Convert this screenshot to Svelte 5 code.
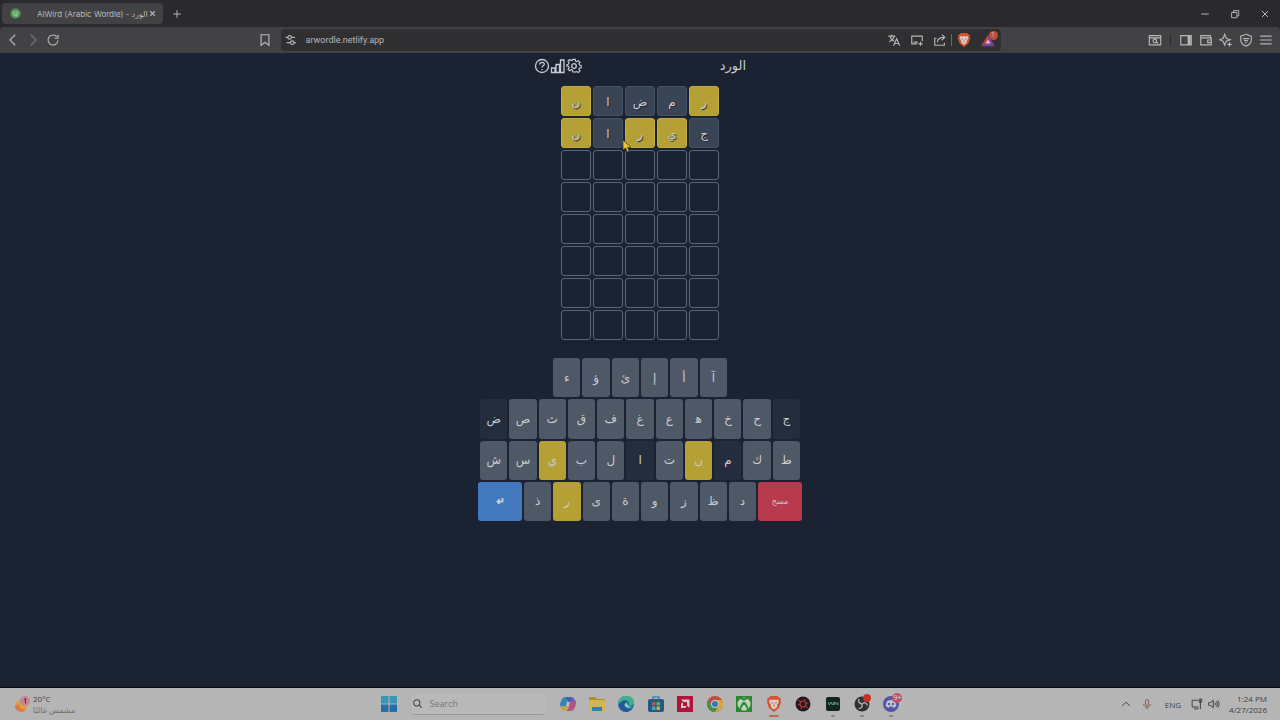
<script>
  const letters = [
    ["ر", "م", "ض", "ا", "ن"],
    ["ج", "ي", "ر", "ا", "ن"],
  ];
  const states = [
    ["present", "absent", "absent", "absent", "present"],
    ["absent", "present", "present", "absent", "present"],
  ];
  const empty_rows = [1, 2, 3, 4, 5, 6];

  const keyboard = [
    ["آ", "أ", "إ", "ئ", "ؤ", "ء"],
    ["ج", "ح", "خ", "ه\u200d", "ع", "غ", "ف", "ق", "ث", "ص", "ض"],
    ["ط", "ك", "م", "ن", "ت", "ا", "ل", "ب", "ي", "س", "ش"],
    ["delete", "د", "ظ", "ز", "و", "ة", "ى", "ر", "ذ", "enter"],
  ];

  // stroke paths on a 16x16 grid
  const icons = {
    back: "M10.5 2L4.500 8l6 6",
    forward: "M5.5 2l6 6-6 6",
    reload: "M12.500 4.500A5.700 5.700 0 1 0 13.700 8.500M13.800 2v4H9.800",
    bookmark: "M3.500 2h9v12L8 10.500l-4.500 3.500z",
    site: "M2 5h2M8.5 5h4M3 11h4M11.5 11h2M4.5 5a2 2 0 1 0 4 0a2 2 0 1 0-4 0M7.5 11a2 2 0 1 0 4 0a2 2 0 1 0-4 0",
    translate: "M1.500 3.500h8M5.500 2v1.500M8.500 3.500c-.8 3-3 5-6 6.500M3.500 4c.7 2.500 2 4 4.500 5.500M7.500 14.500l3.500-8 3.500 8M8.800 12h4.500",
    cast: "M8 12.500H2V3.500h12v6M9.5 12.500h5M12 10v4.500M4 10.500h5",
    share: "M4 6H2v8h11v-3M5 10.500c.3-4 3-5.500 8-5.500M10 1.800L13.500 5 10 8.300",
    find: "M1.500 3h13v10.500h-13zM1.500 5.500h13M5.800 9a2 2 0 1 0 4 0a2 2 0 1 0-4 0M9.500 10.300l1.800 1.700",
    sidebar: "M2 3h12v10.500H2zM10.500 3.500v9.500M11.500 3.500v9.500M12.500 3.500v9.500",
    wallet: "M13 5.500V3H2v10.500h12v-8H2M14 8h-4v3h4",
    sparkle: "M6.500 1.500L8.200 6l4.600 1.700-4.600 1.800-1.700 4.500-1.700-4.500L.8 7.700 4.800 6zM12 10.500v5M9.500 13h5",
    shield: "M8 1.500l6 2.200V8c0 3.300-2.200 5.500-6 7-3.800-1.500-6-3.700-6-7V3.700zM4.500 6.500h7M5.800 8.700h4.400M7.200 11h1.600",
    menu: "M1.500 3.500h13M1.500 8h13M1.500 12.500h13",
    close: "M4 4l8 8M12 4l-8 8",
    plus: "M8 3v10M3 8h10",
    minimize: "M3 8h10",
    restore: "M3.500 6h7v7h-7zM6 6V3.500h7v7h-2.500",
    search: "M2.500 7a4.500 4.500 0 1 0 9 0a4.500 4.500 0 1 0-9 0M10.300 10.300L14 14",
    help: "M1.500 8a6.500 6.500 0 1 0 13 0a6.500 6.500 0 1 0-13 0M5.800 6.500c0-3 4.600-2.800 4.500-.2C10.200 7.800 8 7.800 8 9.500M8 11v1",
    stats: "M1.500 10H5v4.500H1.500zM6 6.500h3.500v8H6zM10.500 2H14v12.500h-3.500z",
    up: "M3 10.500l5-5 5 5",
    mic: "M6 4a2 2 0 0 1 4 0v4a2 2 0 0 1-4 0zM3.500 8c0 5.500 9 5.500 9 0M8 12v3",
    network: "M9 3H1.500v9H10M4 14.500h6M12.500 2v13M10.800 1.500h3.500v4h-3.500z",
    volume: "M1 6h2.500L7 3v10L3.500 10H1zM9 6q2 2 0 4M11 4.500q3 3.500 0 7M13 3q4 5 0 10",
    enter: "M12 3v6H4.500M7.500 5.500L4 9l3.500 3.500",
  };

  const nav = ["back", "forward", "reload"];
  const tools = ["sidebar", "wallet", "sparkle", "shield", "menu"];
  const apps = [
    "Copilot",
    "Explorer",
    "Edge",
    "Store",
    "AMD",
    "Chrome",
    "Xbox",
    "Brave",
    "Recorder",
    "Terminal",
    "OBS",
    "Discord",
  ];
  const running = ["Terminal", "OBS", "Discord"];

  let search = $state("");
  let url = $state("arwordle.netlify.app");

  function key_state(key) {
    if (key === "delete" || key === "enter") return key;
    if (["ن", "ي", "ر"].includes(key)) return "present";
    if (["ج", "ض", "م", "ا"].includes(key)) return "used";
    return "";
  }
</script>

{#snippet icon(name)}
  <svg class="icon" viewBox="0 0 16 16" aria-hidden="true"><path d={icons[name]} /></svg>
{/snippet}

{#snippet brave()}
  <svg class="logo" viewBox="0 0 16 16" aria-hidden="true">
    <path d="M4.500 0h7l2 2 1.500.5-.5 2 .5 1.500-2 6L8 16l-5-4-2-6 .5-1.500-.5-2L2.500 2z" fill="#d6532f" />
    <path d="M4 3.500l2.500.5L8 3.500l1.500.5 2.500-.5 1 2.500-2 3 .2 2L8 13.500 4.800 11 5 9 3 6z" fill="#d8d0cc" />
    <path d="M4.500 5.800l2.500 1-.5 1.200zM11.500 5.800l-2.500 1 .5 1.200zM8 7l.6 3L8 11l-.6-1z" fill="#d6532f" />
  </svg>
{/snippet}

<div class="screen">
  <header class="browser">
    <div class="tabs">
      <div class="tab">
        <svg class="favicon" viewBox="0 0 12 12" aria-hidden="true">
          <circle cx="6" cy="6" r="5.500" fill="#579a5c" />
          <path d="M4 4.500h4v3H4zM5 8.500h3" fill="none" stroke="#a9cfa9" />
        </svg>
        <span class="tab-title">AlWird (Arabic Wordle) - الورد</span>
        <button class="small" aria-label="Close tab">{@render icon("close")}</button>
      </div>
      <button class="new-tab" aria-label="New tab">{@render icon("plus")}</button>
      <div class="window-buttons">
        <button aria-label="Minimize">{@render icon("minimize")}</button>
        <button aria-label="Restore">{@render icon("restore")}</button>
        <button aria-label="Close">{@render icon("close")}</button>
      </div>
    </div>
    <div class="toolbar">
      <div class="side">
        {#each nav as name}
          <button class={name} aria-label={name}>{@render icon(name)}</button>
        {/each}
        <button class="bookmark" aria-label="Bookmark">{@render icon("bookmark")}</button>
      </div>
      <div class="address">
        <button aria-label="Site information">{@render icon("site")}</button>
        <input aria-label="Address" bind:value={url} />
        <div class="address-icons">
          <button aria-label="Translate">{@render icon("translate")}</button>
          <button aria-label="Cast">{@render icon("cast")}</button>
          <button aria-label="Share">{@render icon("share")}</button>
        </div>
        <span class="divider"></span>
        <button class="shields" aria-label="Shields">{@render brave()}</button>
        <button class="rewards" aria-label="Rewards">
          <svg class="logo" viewBox="0 0 16 16" aria-hidden="true">
            <path d="M8 2v8L0 15z" fill="#c8472f" />
            <path d="M8 2l8 13-8-5z" fill="#8b3f91" />
            <path d="M8 10l8 5H0z" fill="#6f4a9d" />
            <path d="M8 7.500l3 4.500H5z" fill="#d5bfd0" />
          </svg>
          <span class="count">1</span>
        </button>
      </div>
      <div class="side right">
        <button aria-label="Find">{@render icon("find")}</button>
        <span class="divider dark"></span>
        {#each tools as name}
          <button aria-label={name}>{@render icon(name)}</button>
        {/each}
      </div>
    </div>
  </header>

  <main dir="rtl">
    <div class="title">
      <h1>الورد</h1>
      <div class="actions">
        <button aria-label="Settings">
          <svg class="icon" viewBox="0 0 16 16" aria-hidden="true">
            <path d="M6.700 1h2.600l.4 1.900 1.400.6 1.700-1.100 1.800 1.800-1.100 1.700.6 1.400 1.900.4v2.600l-1.900.4-.6 1.400 1.100 1.700-1.800 1.800-1.700-1.100-1.400.6L9.300 15H6.700l-.4-1.900-1.400-.6-1.700 1.100-1.800-1.800 1.100-1.700-.6-1.400L0 8.300V7l1.900-.9.6-1.400L1.400 3l1.800-1.800 1.700 1.100 1.400-.6z" transform="translate(.8 .5) scale(.9)" />
            <circle cx="8" cy="8" r="2.300" />
          </svg>
        </button>
        <button aria-label="Statistics">{@render icon("stats")}</button>
        <button aria-label="Help">{@render icon("help")}</button>
      </div>
    </div>

    <div class="board">
      {#each letters as row, i}
        {#each row as letter, j}
          <div class="tile {states[i][j]}">{letter}</div>
        {/each}
      {/each}
      {#each empty_rows as row}
        {#each [0, 1, 2, 3, 4] as cell}
          <div class="tile"></div>
        {/each}
      {/each}
      <svg class="cursor" viewBox="0 0 10 14" aria-hidden="true">
        <path d="M1 1v10l2.500-2 1.800 4 1.800-1-1.600-3.500H9z" fill="#f0c52c" stroke="#33301f" stroke-width=".7" />
      </svg>
    </div>

    <div class="keyboard">
      {#each keyboard as row, i}
        <div class="keys row-{i}">
          {#each row as key}
            <button class="key {key_state(key)}" aria-label={key}>
              {#if key === "enter"}
                {@render icon("enter")}
              {:else if key === "delete"}
                مسح
              {:else}
                {key}
              {/if}
            </button>
          {/each}
        </div>
      {/each}
    </div>
  </main>

  <footer class="taskbar">
    <div class="weather">
      <svg viewBox="0 0 18 18" aria-hidden="true">
        <circle cx="8" cy="11" r="6" fill="#dfa13b" />
        <path d="M2 11a6 6 0 0 0 11 3c-5 1-7-1-7-5z" fill="#d47b48" />
        <circle cx="12" cy="6" r="5" fill="#c98597" />
        <path d="M11 4.500l1.500-1v5" stroke="#54303c" fill="none" />
      </svg>
      <div>
        <div>20°C</div>
        <div class="faint" dir="rtl">مشمس غالبًا</div>
      </div>
    </div>

    <div class="center">
      <button class="app" aria-label="Start">
        <svg viewBox="0 0 16 16" aria-hidden="true">
          <path d="M0 0h7.500v7.500H0zM8.500 0H16v7.500H8.500z" fill="#3b93b5" />
          <path d="M0 8.500h7.500V16H0zM8.500 8.500H16V16H8.500z" fill="#236fa8" />
        </svg>
      </button>
      <label class="search">
        {@render icon("search")}
        <input type="text" placeholder="Search" aria-label="Search" bind:value={search} />
      </label>
      <div class="apps">
        {#each apps as app}
          <button class="app" class:running={running.includes(app)} class:active={app === "Brave"} aria-label={app}>
            {#if app === "Brave"}
              {@render brave()}
            {:else}
              <svg viewBox="0 0 16 16" aria-hidden="true">
                {#if app === "Copilot"}
                  <path d="M5 1h5q-2 1-3 5l-1 4q-1 2-3 2-3 0-3-3 0-3 2-6 1-2 3-2z" fill="#3386b5" />
                  <path d="M0 9q1 2 4 1h4l-1 3q-1 2-3 2-2 0-3-3z" fill="#c4a34b" />
                  <path d="M11 15H6q2-1 3-5l1-4q1-2 3-2 3 0 3 3 0 3-2 6-1 2-3 2z" fill="#b65385" />
                  <path d="M16 7q-1-2-4-1H8l1-3q1-2 3-2 2 0 3 3z" fill="#7d5bb5" />
                  <path d="M5 1h5q2 0 2 4-3 0-4 1-1-4-3-5z" fill="#3b62ae" />
                  <path d="M7 6h2.500L8.500 10H6z" fill="#c3b7bf" />
                {:else if app === "Explorer"}
                  <path d="M0 1h6l2 2h8v12H0z" fill="#b48d2b" />
                  <path d="M0 4h16v11H0z" fill="#d1b753" />
                  <path d="M3 15v-4h10v4z" fill="#347ead" />
                {:else if app === "Edge"}
                  <circle cx="8" cy="8" r="8" fill="#1b75a5" />
                  <path d="M0 8C0-3 16-2 16 6q0 4-6 4 3-5-2-5-4 0-8 3z" fill="#45ae91" />
                  <path d="M3 6q4-4 7 0Q6 5 6 9q1 5 8 4-6 6-12 0-3-4 1-7z" fill="#215a99" />
                  <path d="M9 7q-3 0-2 3 2 3 7 1-5 0-5-4z" fill="#b5c5c5" />
                {:else if app === "Store"}
                  <path d="M5 4V1h6v3" fill="none" stroke="#3c8aa8" stroke-width="1.500" />
                  <rect y="3" width="16" height="13" rx="2" fill="#235984" />
                  <path d="M4 6h3.500v3.500H4z" fill="#b25445" />
                  <path d="M8.500 6H12v3.500H8.500z" fill="#6caa55" />
                  <path d="M4 10.500h3.500V14H4z" fill="#48a0bc" />
                  <path d="M8.500 10.500H12V14H8.500z" fill="#c0ad4c" />
                {:else if app === "AMD"}
                  <path d="M0 0h16v16H0z" fill="#ad1438" />
                  <path d="M4 3.500h8.500V12L10 9.500V6H6.500zM4 8l2-2v4h4l-2 2H4z" fill="#d8c6cb" />
                {:else if app === "Chrome"}
                  <circle cx="8" cy="8" r="8" fill="#c64b3d" />
                  <path d="M1.100 4A8 8 0 0 0 8 16l3.500-6H4.500z" fill="#42904e" />
                  <path d="M15 4a8 8 0 0 1-7 12l3.500-6L8 4z" fill="#cfa938" />
                  <circle cx="8" cy="8" r="4" fill="#c8c8c8" />
                  <circle cx="8" cy="8" r="3" fill="#3b78b6" />
                {:else if app === "Xbox"}
                  <path d="M0 0h16v16H0z" fill="#28892f" />
                  <circle cx="8" cy="8" r="6.500" fill="#c2d0c0" />
                  <path d="M3.500 14q0-5 4.500-8.500 4.500 3.500 4.500 8.500-4.500 2-9 0z" fill="#28892f" />
                  <path d="M3 3q2.500-.5 5 2 2.500-2.500 5-2-2.500-2-5-.8Q5.500 1 3 3z" fill="#28892f" />
                  <path d="M5 14q0-3 3-5.500 3 2.500 3 5.500-3 1-6 0z" fill="#c2d0c0" />
                {:else if app === "Recorder"}
                  <circle cx="8" cy="8" r="7.500" fill="#28191d" />
                  <circle cx="8" cy="8" r="3" fill="none" stroke="#bd3543" stroke-width="1.200" />
                  <path d="M3 4l3 2M10 10l3 2M10 3L9 5.500M6 13l1-2.500M2.500 9L5 8.500M11 7.500l2.500-1" stroke="#bd3543" />
                {:else if app === "Terminal"}
                  <rect x="1" y="1" width="14" height="14" rx="2" fill="#132521" />
                  <path d="M3 6l1.500 3L6 6l1.500 3L9 6v3M10 9V6l3 3V6" fill="none" stroke="#66947d" />
                {:else if app === "OBS"}
                  <circle cx="8" cy="8" r="7.500" fill="#303032" />
                  <path d="M8 8Q3.500 7 5 3M8 8q4-3 5.500 1.500M8 8q1 4.500-3.500 4.500" fill="none" stroke="#a7a7a7" stroke-width="1.500" />
                {:else if app === "Discord"}
                  <circle cx="8" cy="8" r="8" fill="#5256a6" />
                  <path d="M4 5q4-2 8 0l1.500 5-3 2-1-1.500h-3l-1 1.500-3-2z" fill="#c0c0d0" />
                  <path d="M5 7h2v2H5zM9 7h2v2H9z" fill="#5256a6" />
                {/if}
              </svg>
            {/if}
            {#if app === "OBS"}<span class="badge"></span>{/if}
            {#if app === "Discord"}<span class="badge pink">9+</span>{/if}
          </button>
        {/each}
      </div>
    </div>

    <div class="tray">
      <button aria-label="Hidden icons">{@render icon("up")}</button>
      <button class="mic" aria-label="Microphone">{@render icon("mic")}</button>
      <span class="lang">ENG</span>
      <div class="system">
        <button aria-label="Network">{@render icon("network")}</button>
        <button aria-label="Volume">{@render icon("volume")}</button>
      </div>
      <div class="clock">
        <div>1:24 PM</div>
        <div>4/27/2026</div>
      </div>
    </div>
  </footer>
</div>

<style>
  :global(body) {
    margin: 0;
    background: #1b2333;
  }

  .screen {
    display: flex;
    flex-direction: column;
    min-height: 100vh;
    font-family: "Open Sans", "DejaVu Sans", sans-serif;
    color: #c9cbd0;
  }

  button {
    display: flex;
    align-items: center;
    justify-content: center;
    flex-shrink: 0;
    padding: 0;
    border: 0;
    background: none;
    color: inherit;
    font: inherit;
    cursor: pointer;
  }

  input {
    min-width: 0;
    padding: 0;
    border: 0;
    outline: 0;
    background: none;
    color: inherit;
    font: inherit;
  }

  .icon {
    width: 16px;
    height: 16px;
    fill: none;
    stroke: currentColor;
    stroke-width: 1.3;
  }

  .logo {
    width: 14px;
    height: 14px;
  }

  .browser {
    background: #2a2a2e;
    color: #b6b6b8;
    font-family: Inter, "DejaVu Sans", sans-serif;
  }

  .tabs {
    display: flex;
    align-items: center;
    height: 27px;
  }

  .tab {
    display: flex;
    align-items: center;
    box-sizing: border-box;
    width: 161px;
    height: 21px;
    margin-left: 2px;
    padding: 0 6px 0 8px;
    border-radius: 4px;
    background: #424245;
    font-size: 8px;
  }

  .favicon {
    width: 11px;
    height: 11px;
    flex-shrink: 0;
  }

  .tab-title {
    flex: 1;
    margin-left: 16px;
    white-space: nowrap;
  }

  .small .icon {
    width: 9px;
    height: 9px;
    stroke-width: 2;
  }

  .new-tab {
    margin-left: 8px;
  }

  .new-tab .icon {
    width: 12px;
    height: 12px;
  }

  .window-buttons {
    display: flex;
    gap: 18px;
    margin-left: auto;
    padding-right: 9px;
  }

  .window-buttons .icon {
    width: 12px;
    height: 12px;
  }

  .toolbar {
    display: flex;
    height: 26px;
    border-radius: 4px 4px 0 0;
    background: #424245;
  }

  .side {
    display: flex;
    flex: 1;
    align-items: center;
    gap: 4px;
    padding: 0 8px 0 5px;
  }

  .side .forward {
    color: #77777a;
  }

  .side .bookmark {
    margin-left: auto;
  }

  .side.right {
    justify-content: flex-end;
    padding: 0 6px;
  }

  .side .icon,
  .address .icon {
    width: 14px;
    height: 14px;
  }

  .side button {
    width: 16px;
  }

  .address {
    display: flex;
    align-items: center;
    align-self: center;
    box-sizing: border-box;
    width: 720px;
    max-width: 60%;
    height: 22px;
    padding: 0 3px;
    border-radius: 4px;
    background: #303033;
    font-family: Roboto, sans-serif;
    font-size: 9px;
  }

  .address input {
    flex: 1;
    margin-left: 8px;
  }

  .address-icons {
    display: flex;
    gap: 9px;
  }

  .divider {
    width: 1px;
    height: 12px;
    margin: 0 5px 0 4px;
    background: #67676a;
  }

  .divider.dark {
    margin: 0 3px;
    background: #2c2c2f;
  }

  .rewards {
    position: relative;
    margin: 0 3px 0 10px;
  }

  .count {
    position: absolute;
    top: -2px;
    right: -3px;
    width: 9px;
    border-radius: 5px;
    background: #bd5037;
    font-size: 7px;
    line-height: 9px;
  }

  main {
    display: flex;
    flex: 1;
    flex-direction: column;
    align-items: center;
    background: #1b2333;
    font-family: "DejaVu Sans", sans-serif;
  }

  .title {
    display: flex;
    align-items: center;
    justify-content: space-between;
    width: 212px;
    height: 26px;
    margin-bottom: 7px;
  }

  h1 {
    margin: 0;
    font-size: 13px;
    font-weight: 400;
    line-height: 24px;
  }

  .actions {
    display: flex;
  }

  .board {
    position: relative;
    display: grid;
    grid-template-columns: repeat(5, 30px);
    grid-auto-rows: 30px;
    gap: 2px;
  }

  .tile {
    display: flex;
    align-items: center;
    justify-content: center;
    box-sizing: border-box;
    padding-top: 2px;
    border: 1px solid #5a6475;
    border-radius: 3px;
    font-size: 12px;
    text-shadow: 1px 1px 1px #222938;
  }

  .tile.absent {
    border-color: #435064;
    background: #394455;
  }

  .tile.present {
    border-color: #c0aa3c;
    background: #b5a035;
  }

  .cursor {
    position: absolute;
    top: 53px;
    left: 61px;
    width: 10px;
    height: 14px;
  }

  .keyboard {
    display: grid;
    grid-template-rows: repeat(4, 1fr);
    justify-items: center;
    gap: 2px;
    height: 163px;
    margin: 18px 0;
  }

  .keys {
    display: flex;
    gap: 2px;
    width: 320px;
  }

  .keys.row-0 {
    width: 174px;
  }

  .keys.row-3 {
    width: 324px;
  }

  .key {
    flex: 1;
    border-radius: 3px;
    background: #4f5867;
    font-size: 12px;
  }

  .key.used {
    background: #232d3d;
  }

  .key.present {
    background: #b5a035;
  }

  .key.delete,
  .key.enter {
    flex: 0 0 44px;
    background: #b83a4f;
    font-size: 8px;
  }

  .key.enter {
    background: #4379bf;
  }

  .key.enter .icon {
    width: 10px;
    height: 10px;
    stroke-width: 3;
  }

  .taskbar {
    display: grid;
    grid-template-columns: 1fr auto 1fr;
    align-items: center;
    height: 32px;
    border-top: 1px solid #080b12;
    background: #b5b5b5;
    color: #414141;
    font-size: 8px;
    line-height: 11px;
  }

  .weather {
    display: flex;
    align-items: center;
    gap: 2px;
    padding-left: 13px;
  }

  .weather svg {
    width: 18px;
    height: 18px;
  }

  .faint {
    color: #707070;
  }

  .center {
    display: flex;
    align-items: center;
    gap: 15px;
  }

  .app {
    position: relative;
    width: 16px;
    height: 16px;
  }

  .app svg {
    width: 16px;
    height: 16px;
  }

  .app.running::after,
  .app.active::after {
    content: "";
    position: absolute;
    top: 19px;
    width: 4px;
    height: 2px;
    border-radius: 1px;
    background: #858585;
  }

  .app.active::after {
    width: 10px;
    background: #bd6b52;
  }

  .badge {
    position: absolute;
    top: -2px;
    right: -1px;
    width: 8px;
    height: 8px;
    border-radius: 5px;
    background: #ca3028;
  }

  .badge.pink {
    top: -3px;
    right: -3px;
    width: 10px;
    height: 10px;
    background: #bd5266;
    color: #ddd;
    font-size: 7px;
    line-height: 10px;
  }

  .search {
    display: flex;
    align-items: center;
    gap: 7px;
    width: 133px;
    height: 20px;
    border-bottom: 1px solid #999;
    border-radius: 3px;
    background: #b9b9b9;
    font-size: 9px;
  }

  .search .icon {
    width: 11px;
    height: 11px;
    stroke-width: 1.5;
  }

  .search input {
    flex: 1;
  }

  .search input::placeholder {
    color: #777;
    opacity: 1;
  }

  .apps {
    display: flex;
    justify-content: space-between;
    width: 340px;
  }

  .tray {
    display: flex;
    align-items: center;
    justify-content: flex-end;
    padding-right: 13px;
  }

  .tray .icon {
    width: 12px;
    height: 12px;
  }

  .mic {
    margin: 0 12px 0 9px;
    color: #8a5e53;
  }

  .system {
    display: flex;
    gap: 5px;
    margin: 0 9px 0 10px;
  }

  .clock {
    text-align: right;
  }
</style>
